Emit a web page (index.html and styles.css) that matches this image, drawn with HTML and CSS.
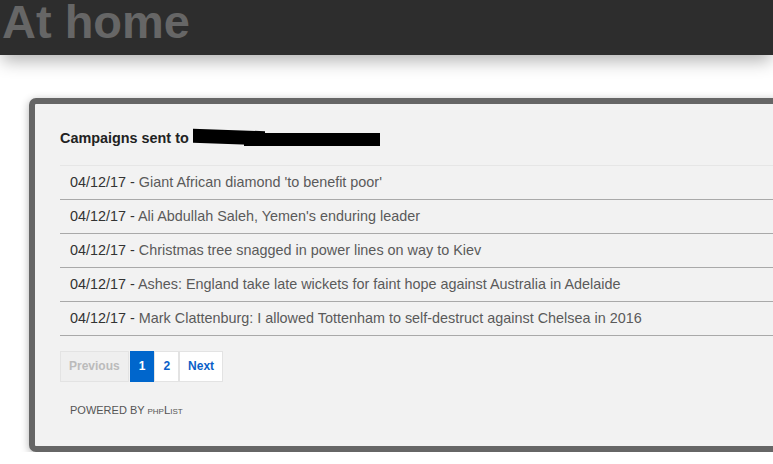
FILE: index.html
```html
<!DOCTYPE html>
<html>
<head>
<meta charset="utf-8">
<link rel="stylesheet" href="styles.css">
</head>
<body>
<header class="topbar">
  <h1 class="site-title">At home</h1>
</header>
<main class="content">
  <section class="panel">
    <h2 class="panel-title">Campaigns sent to <span class="redact"><span class="redact-a"></span><span class="redact-b"></span></span></h2>
    <ul class="campaigns">
      <li class="campaign"><span class="date">04/12/17 - </span><a class="subject">Giant African diamond 'to benefit poor'</a></li>
      <li class="campaign"><span class="date">04/12/17 - </span><a class="subject">Ali Abdullah Saleh, Yemen's enduring leader</a></li>
      <li class="campaign"><span class="date">04/12/17 - </span><a class="subject">Christmas tree snagged in power lines on way to Kiev</a></li>
      <li class="campaign"><span class="date">04/12/17 - </span><a class="subject">Ashes: England take late wickets for faint hope against Australia in Adelaide</a></li>
      <li class="campaign"><span class="date">04/12/17 - </span><a class="subject">Mark Clattenburg: I allowed Tottenham to self-destruct against Chelsea in 2016</a></li>
    </ul>
    <nav class="pager">
      <span class="page disabled">Previous</span>
      <span class="page active">1</span>
      <span class="page">2</span>
      <span class="page">Next</span>
    </nav>
    <p class="powered">Powered by <span class="brand">phpList</span></p>
  </section>
</main>
</body>
</html>
```

FILE: styles.css
```css
html, body {
  margin: 0;
  padding: 0;
  overflow: hidden;
  background: #ffffff;
  font-family: "Liberation Sans", Arial, sans-serif;
}

.topbar {
  height: 55px;
  background: #2d2d2d;
  overflow: hidden;
  box-shadow: 0 8px 16px -2px rgba(0, 0, 0, 0.3);
  position: relative;
}

.site-title {
  margin: -2px 0 0 2px;
  font-size: 47px;
  line-height: 47px;
  font-weight: bold;
  color: #666666;
}

.content {
  padding: 43px 0 0 29px;
}

.panel {
  width: 800px;
  background: #f2f2f2;
  border: 6px solid #666666;
  border-radius: 7px;
  box-shadow: 0 2px 8px rgba(0, 0, 0, 0.3);
  padding: 25px 0 29px 25px;
  box-sizing: border-box;
}

.panel-title {
  margin: 0;
  font-size: 14.4px;
  line-height: 18px;
  font-weight: bold;
  color: #222222;
  display: flex;
  align-items: center;
}

.redact {
  display: inline-flex;
  margin-left: 4px;
  height: 18px;
  position: relative;
  width: 188px;
}

.redact-a {
  position: absolute;
  left: 0;
  top: 1px;
  width: 72px;
  height: 14px;
  background: #000;
  transform: skewY(2deg);
}

.redact-b {
  position: absolute;
  left: 51px;
  top: 4px;
  width: 136px;
  height: 13px;
  background: #000;
}

.campaigns {
  list-style: none;
  margin: 18px 0 0 0;
  padding: 0;
  border-top: 1px solid #e6e6e6;
}

.campaign {
  padding: 7px 10px;
  line-height: 19px;
  font-size: 14.4px;
  border-bottom: 1px solid #a9a9a9;
  white-space: nowrap;
}

.date {
  color: #333333;
}

.subject {
  color: #5a5a5a;
}

.pager {
  display: flex;
  margin-top: 15px;
}

.page {
  display: block;
  height: 29px;
  line-height: 29px;
  padding: 0 8px;
  border: 1px solid #e3e3e3;
  background: #ffffff;
  color: #0a5fc8;
  font-size: 12px;
  font-weight: bold;
}

.page.disabled {
  background: #efefef;
  color: #bbbbbb;
  margin-right: 1px;
}

.page.active {
  background: #0066cc;
  border-color: #0066cc;
  color: #ffffff;
}

.powered {
  margin: 21px 0 0 10px;
  font-size: 11px;
  line-height: 14px;
  text-transform: uppercase;
  color: #555555;
}

.brand {
  text-transform: none;
  font-variant: small-caps;
  font-size: 11.5px;
}
```
